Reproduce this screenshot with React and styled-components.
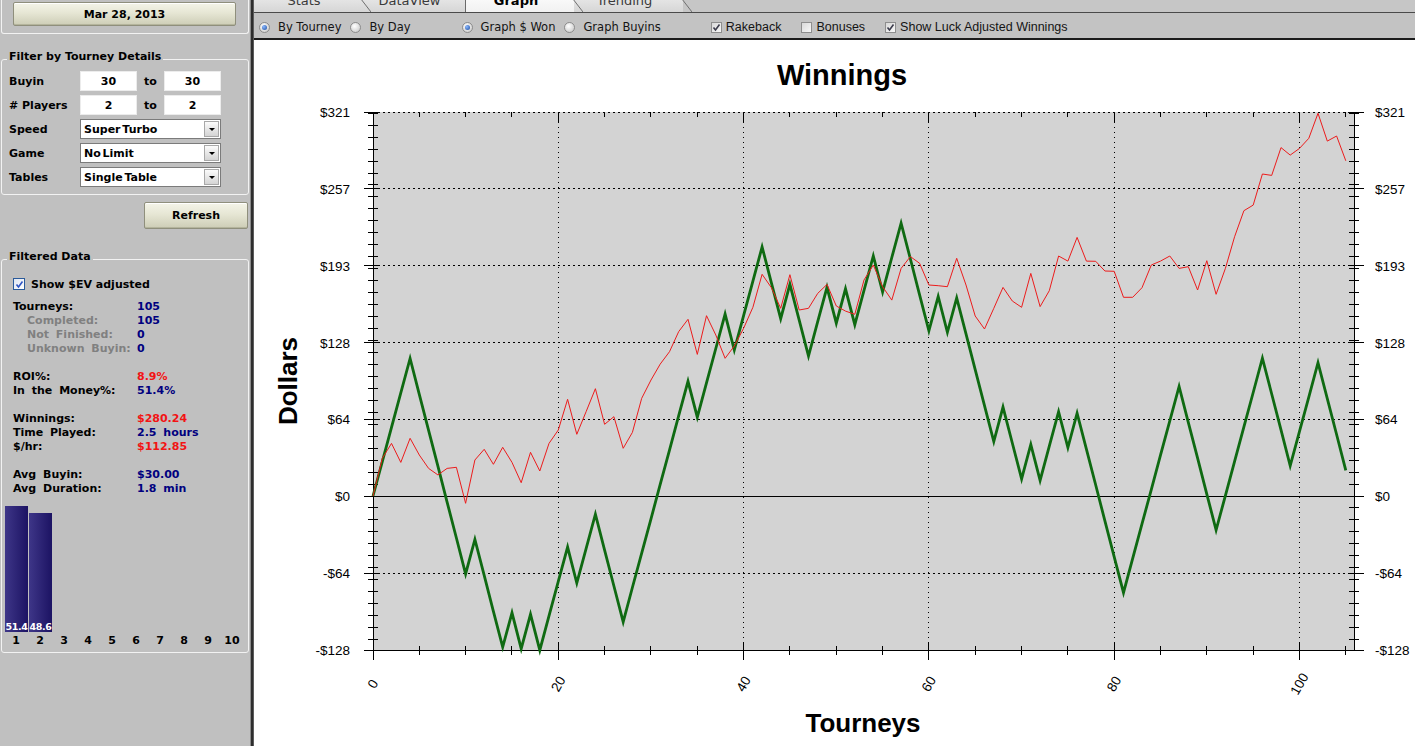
import React from "react";
import styled, { createGlobalStyle } from "styled-components";

const GlobalStyle = createGlobalStyle`
  html, body, #root {
    margin: 0;
    padding: 0;
    width: 100%;
    height: 100%;
  }
  body {
    overflow: hidden;
    background: #c0c0c0;
    font-family: "DejaVu Sans", Verdana, sans-serif;
    color: #000;
  }
  * {
    box-sizing: border-box;
  }
`;

const Window = styled.div`
  display: flex;
  width: 1415px;
  height: 746px;
  overflow: hidden;
  background: #c0c0c0;
`;

/* ---------- left side ---------- */

const Sidebar = styled.aside`
  flex: none;
  width: 250px;
  display: flex;
  flex-direction: column;
  font-size: 11px;
  font-weight: bold;
`;

const Splitter = styled.div`
  flex: none;
  width: 4px;
  background: linear-gradient(to right, #8a8a8a 0 1px, #2e2e2e 1px 3px, #5c5c5c 3px);
`;

const DateBox = styled.div`
  height: 34px;
  margin: 0 1px;
  padding: 2px 0 0 11px;
  border: 1px solid #f2f2f2;
  border-top: none;
  border-radius: 0 0 3px 3px;
`;

const XpButton = styled.button`
  width: ${(p) => p.$width}px;
  height: ${(p) => p.$height}px;
  padding: 0;
  border: 1px solid #8f8f7c;
  border-radius: 2px;
  background: linear-gradient(#f4f4e8, #e6e6d4 45%, #cdcdb6);
  box-shadow: inset 0 -1px 0 #b4b49c, inset 0 1px 0 #fff;
  font: bold 11px "DejaVu Sans", Verdana, sans-serif;
  color: #000;
`;

const GroupBox = styled.fieldset`
  margin: ${(p) => p.$top}px 1px 0;
  padding: ${(p) => p.$pad};
  border: 1px solid #f2f2f2;
  border-radius: 3px;
  min-width: 0;
`;

const GroupTitle = styled.legend`
  margin-left: 5px;
  padding: 0 2px 4px;
  line-height: 14px;
  font-size: 11px;
  font-weight: bold;
`;

const FilterGrid = styled.div`
  display: grid;
  grid-template-columns: 71px 57px 27px 57px;
  grid-auto-rows: 20px;
  row-gap: 4px;
  align-items: center;
  margin-left: 7px;
`;

const To = styled.span`
  text-align: center;
`;

const NumBox = styled.div`
  height: 20px;
  line-height: 19px;
  text-align: center;
  background: #fff;
  border: 1px solid #ececec;
`;

const Select = styled.div`
  grid-column: 2 / 5;
  height: 20px;
  display: flex;
  align-items: center;
  justify-content: space-between;
  padding: 0 1px 0 3px;
  background: #fff;
  border: 1px solid #7b7b7b;
  word-spacing: -2px;
`;

const DropArrow = styled.span`
  width: 15px;
  height: 16px;
  display: flex;
  align-items: center;
  justify-content: center;
  border: 1px solid #a8a8a8;
  background: linear-gradient(#fbfbfb, #d4d4d4);
  &::after {
    content: "";
    border-left: 3px solid transparent;
    border-right: 3px solid transparent;
    border-top: 3px solid #000;
  }
`;

const ButtonRow = styled.div`
  display: flex;
  justify-content: flex-end;
  margin: 7px 2px 0 0;
`;

const CheckRow = styled.label`
  display: flex;
  align-items: center;
  gap: 6px;
  height: 14px;
  margin: 9px 0 9px 11px;
`;

const BlueCheck = styled.span`
  width: 12px;
  height: 12px;
  display: flex;
  align-items: center;
  justify-content: center;
  border: 1px solid #2a5a9a;
  background: linear-gradient(135deg, #dfe6f2, #ffffff);
`;

const Stats = styled.dl`
  display: grid;
  grid-template-columns: 124px 1fr;
  grid-auto-rows: 14px;
  margin: 0 0 0 11px;
  line-height: 14px;
  word-spacing: 3px;
`;

const StatLabel = styled.dt`
  margin: 0;
  padding-left: ${(p) => (p.$sub ? 14 : 0)}px;
  color: ${(p) => (p.$sub ? "#808080" : "#000")};
  white-space: nowrap;
`;

const StatValue = styled.dd`
  margin: 0;
  color: ${(p) => (p.$red ? "#f21414" : "#00007f")};
  white-space: nowrap;
`;

const StatGap = styled.div`
  grid-column: 1 / -1;
`;

const Histogram = styled.div`
  display: grid;
  grid-template-columns: repeat(10, 24px);
  grid-template-rows: 136px 18px;
  margin-left: 2px;
  padding-bottom: 2px;
`;

const BarCell = styled.div`
  display: flex;
  align-items: flex-end;
  padding-left: 1px;
`;

const Bar = styled.div`
  width: 23px;
  display: flex;
  align-items: flex-end;
  justify-content: center;
  background: linear-gradient(to right, #3e3688, #1c1363);
  color: #fff;
  font-size: 9.5px;
  letter-spacing: -0.4px;
  line-height: 11px;
`;

const BinLabel = styled.span`
  text-align: center;
  line-height: 18px;
`;

/* ---------- right side ---------- */

const Main = styled.main`
  flex: 1;
  min-width: 0;
  display: flex;
  flex-direction: column;
`;

const TabStrip = styled.div`
  flex: none;
  height: 13px;
  display: flex;
  overflow: hidden;
  background: #c6c6c6;
  border-bottom: 1px solid #4a4a4a;
`;

const Tab = styled.div`
  position: relative;
  flex: none;
  width: ${(p) => p.$width}px;
  height: 22px;
  margin-top: -10px;
  padding-right: 8px;
  text-align: center;
  line-height: 22px;
  font-size: 13px;
  font-weight: ${(p) => (p.$active ? "bold" : "normal")};
  color: ${(p) => (p.$active ? "#000" : "#3a3a3a")};
  background: ${(p) =>
    p.$active ? "linear-gradient(#ffffff, #f1f1f1)" : "linear-gradient(#f0f0f0, #d6d6d6)"};
  border-left: ${(p) => (p.$active ? "1px solid #6a6a6a" : "none")};
  &::after {
    content: "";
    position: absolute;
    top: 0;
    bottom: 0;
    right: -9px;
    width: 17px;
    z-index: 1;
    display: ${(p) => (p.$edge ? "block" : "none")};
    background: linear-gradient(
      to top right,
      transparent calc(50% - 0.8px),
      #6f6f6f 50%,
      transparent calc(50% + 0.8px)
    );
  }
`;

const Toolbar = styled.div`
  flex: none;
  height: 27px;
  display: flex;
  align-items: center;
  padding: 3px 0 0 5px;
  background: #c3c3c3;
  border-bottom: 2px solid #1c1c1c;
  color: #141414;
`;

const OptionGroup = styled.div`
  display: flex;
  align-items: center;
  gap: ${(p) => p.$gap}px;
  margin-left: ${(p) => p.$offset || 0}px;
`;

const Option = styled.label`
  display: flex;
  align-items: center;
  gap: ${(p) => (p.$box ? 4 : 8)}px;
  font-family: ${(p) =>
    p.$box ? '"Liberation Sans", Arial, sans-serif' : '"DejaVu Sans", Verdana, sans-serif'};
  font-size: ${(p) => (p.$box ? "12.5px" : "11.5px")};
  white-space: nowrap;
`;

const Radio = styled.span`
  width: 11px;
  height: 11px;
  border-radius: 50%;
  border: 1px solid #8c8c8c;
  background: radial-gradient(circle at 40% 35%, #ffffff, #d2d2d2 75%);
  display: flex;
  align-items: center;
  justify-content: center;
  &::after {
    content: "";
    width: 5px;
    height: 5px;
    border-radius: 50%;
    background: ${(p) =>
      p.$on ? "radial-gradient(circle at 35% 35%, #8ab8ff, #1d4c9e)" : "transparent"};
  }
`;

const Box = styled.span`
  width: 11px;
  height: 11px;
  display: flex;
  align-items: center;
  justify-content: center;
  border: 1px solid #8e8e8e;
  background: linear-gradient(135deg, #d9d9d9, #f8f8f8);
`;

const ChartArea = styled.div`
  flex: 1;
  background: #fff;
  overflow: hidden;
`;

/* ---------- data ---------- */

const STATS = [
  [
    { label: "Tourneys:", value: "105" },
    { label: "Completed:", value: "105", sub: true },
    { label: "Not Finished:", value: "0", sub: true },
    { label: "Unknown Buyin:", value: "0", sub: true },
  ],
  [
    { label: "ROI%:", value: "8.9%", red: true },
    { label: "In the Money%:", value: "51.4%" },
  ],
  [
    { label: "Winnings:", value: "$280.24", red: true },
    { label: "Time Played:", value: "2.5 hours" },
    { label: "$/hr:", value: "$112.85", red: true },
  ],
  [
    { label: "Avg Buyin:", value: "$30.00" },
    { label: "Avg Duration:", value: "1.8 min" },
  ],
];

const FINISHES = [51.4, 48.6, 0, 0, 0, 0, 0, 0, 0, 0];

const RUNS =
  "4W6L1W3L1W1L1W1L3W1L2W3L7W1L3W1L3W2L1W2L2W1L1W1L2W1L2W3L1W1L1W4L1W2L1W1L2W1L1W5L6W4L5W3L3W3L";

const ACTUAL = (() => {
  const out = [0];
  let v = 0;
  for (const [, n, r] of RUNS.matchAll(/(\d+)([WL])/g)) {
    for (let k = 0; k < +n; k++) {
      v += r === "W" ? 28.73 : -30;
      out.push(v);
    }
  }
  return out;
})();

const ADJUSTED = [
  0, 31.5, 44.0, 28.1, 48.2, 34.3, 23.1, 17.6, 23.1, 24.0,
  -6.1, 30.1, 39.0, 26.5, 40.7, 28.1, 11.1, 36.5, 20.9, 44.0,
  55.2, 80.8, 51.6, 70.5, 89.7, 59.9, 66.3, 39.9, 53.2, 81.7,
  97.0, 110.3, 120.6, 137.4, 147.7, 118.4, 150.7, 134.6, 115.1, 125.4,
  140.2, 157.7, 185.3, 174.1, 156.9, 185.0, 155.5, 156.9, 169.4, 176.9,
  158.8, 154.6, 151.9, 180.6, 193.1, 175.0, 163.8, 190.3, 200.1, 194.5,
  176.4, 175.8, 175.0, 198.7, 176.4, 150.5, 139.6, 156.9, 174.4, 163.0,
  157.7, 186.1, 158.3, 171.6, 200.6, 196.4, 216.2, 196.4, 196.2, 188.1,
  187.8, 166.1, 166.1, 174.1, 193.1, 196.4, 200.6, 190.3, 191.7, 172.2,
  196.7, 168.6, 190.3, 216.8, 238.5, 243.2, 269.2, 268.0, 291.2, 285.0,
  290.6, 299.0, 319.9, 296.7, 300.9, 280.24,
];

/* ---------- chart ---------- */

const X0 = 373;
const X1 = 1354;
const XS = 9.265;
const YTOP = 112;
const YBOT = 650;
const YZERO = 496;
const YS = 384 / 321;
const px = (i) => X0 + i * XS;
const py = (v) => YZERO - v * YS;

const Y_LABELS = ["$321", "$257", "$193", "$128", "$64", "$0", "-$64", "-$128"];
const MAJOR_Y = Y_LABELS.map((_, k) => YTOP + (k * (YBOT - YTOP)) / 7);
const MINOR_Y = Array.from({ length: 45 }, (_, k) => py(-120 + k * 10));
const X_TICKS = Array.from({ length: 22 }, (_, k) => k * 5);

const linePath = (vals) =>
  vals.map((v, i) => `${i ? "L" : "M"}${px(i).toFixed(1)},${py(v).toFixed(1)}`).join("");

const FONT = '"Liberation Sans", Arial, sans-serif';

const WinningsChart = () => (
  <svg width="1161" height="706" viewBox="254 40 1161 706" style={{ display: "block" }}>
    <rect x={X0} y={YTOP} width={X1 - X0} height={YBOT - YTOP} fill="#d3d3d3" />

    <g stroke="#000" strokeWidth="1" shapeRendering="crispEdges">
      {MAJOR_Y.slice(0, 5).concat(MAJOR_Y[6]).map((y) => (
        <line key={y} x1={X0} x2={X1} y1={y} y2={y} strokeDasharray="2 3" />
      ))}
      {[20, 40, 60, 80, 100].map((k) => (
        <line key={k} x1={px(k)} x2={px(k)} y1={YTOP} y2={YBOT} strokeDasharray="1 4" />
      ))}
      <line x1={364} x2={X1} y1={MAJOR_Y[5]} y2={MAJOR_Y[5]} />
      <line x1={X0} x2={X0} y1={YTOP} y2={660} />
      <line x1={X1} x2={X1} y1={YTOP} y2={YBOT} />
      <line x1={364} x2={X1} y1={YBOT} y2={YBOT} />
      {MINOR_Y.map((y) => (
        <g key={y}>
          <line x1={368} x2={378} y1={y} y2={y} />
          <line x1={1349} x2={1359} y1={y} y2={y} />
        </g>
      ))}
      {MAJOR_Y.map((y) => (
        <g key={y}>
          <line x1={364} x2={378} y1={y} y2={y} />
          <line x1={1349} x2={1364} y1={y} y2={y} />
        </g>
      ))}
      {X_TICKS.map((k) => {
        const major = k % 20 === 0;
        return (
          <g key={k}>
            <line x1={px(k)} x2={px(k)} y1={major ? 642 : 646} y2={major ? 660 : 655} />
            <line x1={px(k)} x2={px(k)} y1={YTOP} y2={major ? 122 : 117} />
          </g>
        );
      })}
    </g>

    <path d={linePath(ACTUAL)} fill="none" stroke="#0f6a12" strokeWidth="2.8" />
    <path d={linePath(ADJUSTED)} fill="none" stroke="#ec1c1c" strokeWidth="1" />

    <g fontFamily={FONT} fontSize="13.5" fill="#000">
      {Y_LABELS.map((t, k) => (
        <g key={t}>
          <text x={350} y={MAJOR_Y[k] + 5} textAnchor="end">
            {t}
          </text>
          <text x={1375} y={MAJOR_Y[k] + 5}>
            {t}
          </text>
        </g>
      ))}
      {[0, 20, 40, 60, 80, 100].map((k) => (
        <text
          key={k}
          transform={`translate(${px(k)} 684) rotate(-60)`}
          textAnchor="middle"
          dominantBaseline="central"
        >
          {k}
        </text>
      ))}
    </g>

    <g fontFamily={FONT} fontWeight="bold" fill="#000" textAnchor="middle">
      <text x={842} y={85} fontSize="29">
        Winnings
      </text>
      <text transform="translate(297 381) rotate(-90)" fontSize="26">
        Dollars
      </text>
      <text x={863} y={732} fontSize="26">
        Tourneys
      </text>
    </g>
  </svg>
);

const Tick = ({ color }) => (
  <svg width="9" height="9" viewBox="0 0 9 9">
    <polyline points="1.5,4.5 3.5,7 7.5,1.5" fill="none" stroke={color} strokeWidth="1.6" />
  </svg>
);

export default function App() {
  return (
    <>
      <GlobalStyle />
      <Window>
        <Sidebar>
          <DateBox>
            <XpButton $width={223} $height={24}>Mar 28, 2013</XpButton>
          </DateBox>

          <GroupBox $top={16} $pad="3px 0 7px 0">
            <GroupTitle>Filter by Tourney Details</GroupTitle>
            <FilterGrid>
              <span>Buyin</span>
              <NumBox>30</NumBox>
              <To>to</To>
              <NumBox>30</NumBox>
              <span># Players</span>
              <NumBox>2</NumBox>
              <To>to</To>
              <NumBox>2</NumBox>
              <span>Speed</span>
              <Select>
                Super Turbo
                <DropArrow />
              </Select>
              <span>Game</span>
              <Select>
                No Limit
                <DropArrow />
              </Select>
              <span>Tables</span>
              <Select>
                Single Table
                <DropArrow />
              </Select>
            </FilterGrid>
          </GroupBox>

          <ButtonRow>
            <XpButton $width={104} $height={27}>Refresh</XpButton>
          </ButtonRow>

          <GroupBox $top={21} $pad="0">
            <GroupTitle>Filtered Data</GroupTitle>
            <CheckRow>
              <BlueCheck>
                <Tick color="#2f55c4" />
              </BlueCheck>
              Show $EV adjusted
            </CheckRow>
            <Stats>
              {STATS.map((group, g) => (
                <React.Fragment key={g}>
                  {g > 0 && <StatGap />}
                  {group.map((s) => (
                    <React.Fragment key={s.label}>
                      <StatLabel $sub={s.sub}>{s.label}</StatLabel>
                      <StatValue $red={s.red}>{s.value}</StatValue>
                    </React.Fragment>
                  ))}
                </React.Fragment>
              ))}
            </Stats>
            <Histogram>
              {FINISHES.map((v, i) => (
                <BarCell key={i}>
                  {v > 0 && <Bar style={{ height: `${v * 2.45}px` }}>{v}</Bar>}
                </BarCell>
              ))}
              {FINISHES.map((_, i) => (
                <BinLabel key={i}>{i + 1}</BinLabel>
              ))}
            </Histogram>
          </GroupBox>
        </Sidebar>

        <Splitter />

        <Main>
          <TabStrip>
            <Tab $width={108} $edge>
              Stats
            </Tab>
            <Tab $width={103}>DataView</Tab>
            <Tab $width={109} $active $edge>
              Graph
            </Tab>
            <Tab $width={109} $edge>
              Trending
            </Tab>
          </TabStrip>

          <Toolbar>
            <OptionGroup $gap={9}>
              <Option>
                <Radio $on />
                By Tourney
              </Option>
              <Option>
                <Radio />
                By Day
              </Option>
            </OptionGroup>
            <OptionGroup $gap={9} $offset={51}>
              <Option>
                <Radio $on />
                Graph $ Won
              </Option>
              <Option>
                <Radio />
                Graph Buyins
              </Option>
            </OptionGroup>
            <OptionGroup $gap={20} $offset={50}>
              <Option $box>
                <Box>
                  <Tick color="#3c3c4c" />
                </Box>
                Rakeback
              </Option>
              <Option $box>
                <Box />
                Bonuses
              </Option>
              <Option $box>
                <Box>
                  <Tick color="#3c3c4c" />
                </Box>
                Show Luck Adjusted Winnings
              </Option>
            </OptionGroup>
          </Toolbar>

          <ChartArea>
            <WinningsChart />
          </ChartArea>
        </Main>
      </Window>
    </>
  );
}
